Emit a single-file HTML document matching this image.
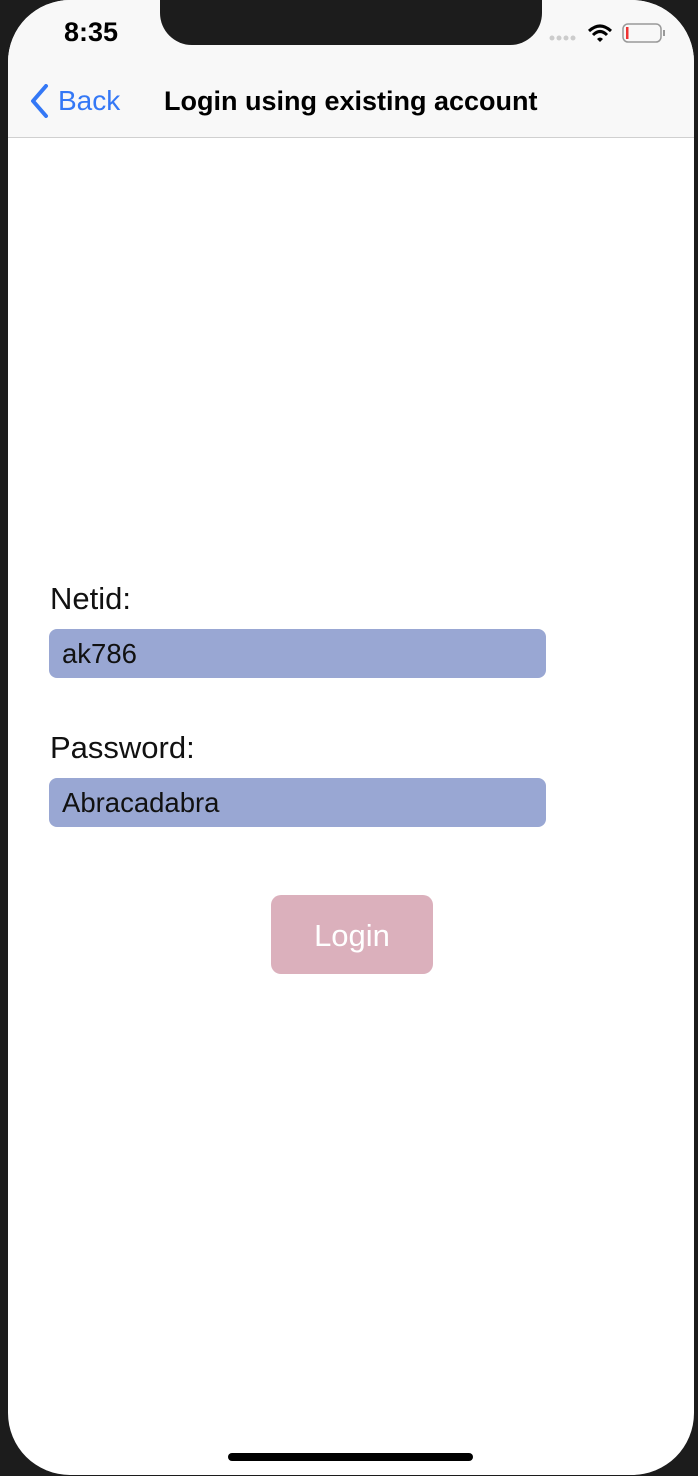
<!DOCTYPE html>
<html><head><style>
html,body{margin:0;padding:0;}
body{width:698px;height:1476px;background:#1c1c1c;position:relative;overflow:hidden;font-family:"Liberation Sans",sans-serif;}
.phone{position:absolute;left:8px;top:0;width:686px;height:1475px;background:#fff;border-radius:62px;overflow:hidden;}
.nav{position:absolute;left:0;top:0;width:686px;height:137px;background:#f8f8f8;border-bottom:1px solid #d0d0d0;}
.notch{position:absolute;left:152px;top:-40px;width:382px;height:85px;background:#1c1c1c;border-radius:32px;}
.time{position:absolute;left:56px;top:17px;font-size:27px;font-weight:bold;color:#000;}
.back{position:absolute;left:50px;top:85px;font-size:28px;color:#3478f6;}
.title{position:absolute;left:156px;top:86px;font-size:27px;font-weight:bold;color:#000;}
.lbl{position:absolute;left:42px;font-size:31px;color:#111;}
.inp{position:absolute;left:41px;width:497px;height:49px;background:#99a7d3;border-radius:8px;font-size:27.5px;color:#111;box-sizing:border-box;padding-left:13px;line-height:49px;}
.btn{position:absolute;left:263px;top:895px;width:162px;height:79px;background:#dbb0bc;border-radius:10px;color:#fff;font-size:31px;text-align:center;line-height:82px;}
.home{position:absolute;left:220px;top:1453px;width:245px;height:8px;background:#000;border-radius:4px;}
</style></head><body>
<div class="phone">
<div class="nav">
<div class="notch"></div>
<div class="time">8:35</div>
<svg style="position:absolute;left:540px;top:20px" width="130" height="26" viewBox="0 0 130 26">
<circle cx="4" cy="18" r="2.5" fill="#ccc"/><circle cx="11" cy="18" r="2.5" fill="#ccc"/><circle cx="18" cy="18" r="2.5" fill="#ccc"/><circle cx="25" cy="18" r="2.5" fill="#ccc"/>
<path d="M41 11 Q52 1 63 11" stroke="#000" stroke-width="3" fill="none"/>
<path d="M45 15 Q52 8 59 15" stroke="#000" stroke-width="3" fill="none"/>
<path d="M49 19 L52 22 L55 19 Q52 16 49 19Z" fill="#000"/>
<rect x="75" y="4" width="38" height="18" rx="5" fill="none" stroke="#999" stroke-width="1.5"/>
<rect x="78" y="7" width="2.5" height="12" fill="#e33"/>
<rect x="115" y="10" width="2" height="6" fill="#999"/>
</svg>
<svg style="position:absolute;left:20px;top:84px" width="24" height="34" viewBox="0 0 24 34"><path d="M18 2 L5 17 L18 32" stroke="#3478f6" stroke-width="4" fill="none" stroke-linecap="round" stroke-linejoin="round"/></svg>
<div class="back">Back</div>
<div class="title">Login using existing account</div>
</div>
<div class="lbl" style="top:581px">Netid:</div>
<div class="inp" style="top:629px">ak786</div>
<div class="lbl" style="top:730px">Password:</div>
<div class="inp" style="top:778px">Abracadabra</div>
<div class="btn">Login</div>
<div class="home"></div>
</div>
</body></html>
